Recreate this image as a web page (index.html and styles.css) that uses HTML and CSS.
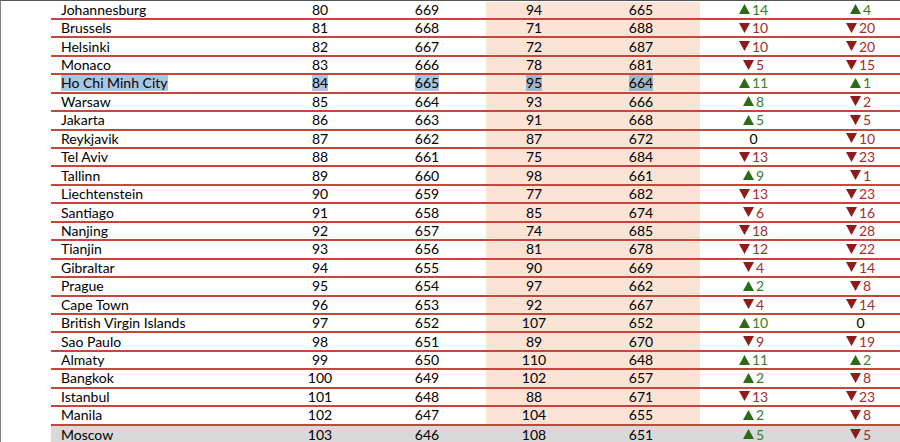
FILE: index.html
```html
<!DOCTYPE html>
<html>
<head>
<meta charset="utf-8">
<link rel="stylesheet" href="styles.css">
</head>
<body>
<div class="frame">
  <div class="table" id="tbl"></div>
</div>
<script>
const rows = [
["Johannesburg",80,669,94,665,14,4],
["Brussels",81,668,71,688,-10,-20],
["Helsinki",82,667,72,687,-10,-20],
["Monaco",83,666,78,681,-5,-15],
["Ho Chi Minh City",84,665,95,664,11,1,"sel"],
["Warsaw",85,664,93,666,8,-2],
["Jakarta",86,663,91,668,5,-5],
["Reykjavik",87,662,87,672,0,-10],
["Tel Aviv",88,661,75,684,-13,-23],
["Tallinn",89,660,98,661,9,-1],
["Liechtenstein",90,659,77,682,-13,-23],
["Santiago",91,658,85,674,-6,-16],
["Nanjing",92,657,74,685,-18,-28],
["Tianjin",93,656,81,678,-12,-22],
["Gibraltar",94,655,90,669,-4,-14],
["Prague",95,654,97,662,2,-8],
["Cape Town",96,653,92,667,-4,-14],
["British Virgin Islands",97,652,107,652,10,0],
["Sao Paulo",98,651,89,670,-9,-19],
["Almaty",99,650,110,648,11,2],
["Bangkok",100,649,102,657,2,-8],
["Istanbul",101,648,88,671,-13,-23],
["Manila",102,647,104,655,2,-8],
["Moscow",103,646,108,651,5,-5,"grey"]
];
const up = '<svg class="tri" viewBox="0 0 11 10" width="11" height="10"><polygon points="5.5,0 11,10 0,10" fill="#2b6b18"/></svg>';
const down = '<svg class="tri" viewBox="0 0 11 10" width="11" height="10"><polygon points="0,0 11,0 5.5,10" fill="#8e1a1a"/></svg>';
function delta(v){
  if(v===0) return '<div class="cell chg"><span class="zero">0</span></div>';
  if(v>0) return '<div class="cell chg"><span class="upv">'+up+'<span>'+v+'</span></span></div>';
  return '<div class="cell chg"><span class="dnv">'+down+'<span>'+(-v)+'</span></span></div>';
}
const tbl = document.getElementById('tbl');
let html = '';
for(const r of rows){
  const sel = r[7]==='sel';
  const cls = 'row' + (r[7]==='grey' ? ' grey' : '');
  const w = (t, c) => sel ? '<span class="'+c+'">'+t+'</span>' : t;
  html += '<div class="'+cls+'">'+
    '<div class="cell city">'+w(r[0],'hl')+'</div>'+
    '<div class="cell num">'+w(r[1],'hl')+'</div>'+
    '<div class="cell num">'+w(r[2],'hl')+'</div>'+
    '<div class="cell num peach">'+w(r[3],'hl2')+'</div>'+
    '<div class="cell num peach">'+w(r[4],'hl2')+'</div>'+
    delta(r[5])+delta(r[6])+
  '</div>';
}
tbl.innerHTML = html;
</script>
</body>
</html>
```
FILE: styles.css
```css
html, body {
  margin: 0;
  padding: 0;
  background: #ffffff;
  width: 900px;
  height: 442px;
  overflow: hidden;
}
.frame {
  box-sizing: border-box;
  width: 900px;
  height: 442px;
  border-top: 1px solid #555555;
  border-left: 1px solid #808080;
  overflow: hidden;
  padding-left: 50px;
  padding-top: 0.5px;
}
.table {
  width: 863px;
  font-family: Lato, "Liberation Sans", sans-serif;
  font-size: 14px;
  color: #000;
}
.row {
  display: grid;
  grid-template-columns: 221px repeat(6, 107px);
  height: 18.45px;
  box-sizing: border-box;
  border-bottom: 2px solid #c8453c;
}
.row.grey {
  background: #d9d9d9;
  height: 17px;
  border-bottom: none;
}
.row.grey .cell {
  line-height: 14px;
  padding-top: 2px;
  align-items: flex-start;
}
.row.grey .peach {
  background: transparent;
}
.cell {
  display: flex;
  align-items: center;
  justify-content: center;
  line-height: 16px;
  white-space: nowrap;
}
.city {
  justify-content: flex-start;
  padding-left: 10px;
}
.num {
  padding-right: 11px;
}
.peach {
  background: #fbe4d5;
}
.hl {
  background: #a9c5e4;
}
.hl2 {
  background: #a4b6c6;
}
.chg span {
  display: inline-flex;
  align-items: center;
}
.tri {
  margin-right: 2px;
  margin-top: -1px;
}
.upv {
  color: #3a7d28;
}
.dnv {
  color: #a52c2c;
}
.zero {
  color: #000;
}
```
